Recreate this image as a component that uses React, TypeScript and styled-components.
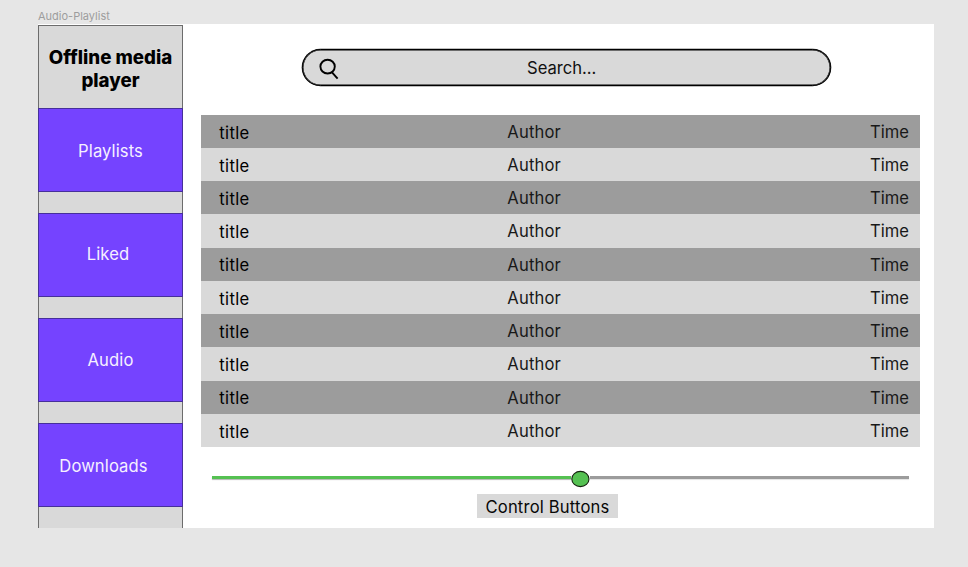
import React from "react";
import styled, { createGlobalStyle } from "styled-components";

const GlobalStyle = createGlobalStyle`
  * { box-sizing: border-box; }
  body {
    margin: 0;
    background: #e6e6e6;
    font-family: Inter, "Liberation Sans", sans-serif;
    font-optical-sizing: none;
    overflow: hidden;
  }
`;

const Canvas = styled.div`
  width: 968px;
  height: 567px;
  padding: 9px 34px 0 38px;
`;

const FrameLabel = styled.div`
  height: 15px;
  font-size: 11px;
  line-height: 15px;
  color: #9d9d9d;
`;

const Frame = styled.div`
  display: flex;
  width: 896px;
  height: 504px;
  background: #fff;
`;

const Sidebar = styled.aside`
  width: 145px;
  height: 503px;
  margin-top: 1px;
  background: #d9d9d9;
  border: 1px solid #6c6c6c;
  border-bottom: 0;
`;

const Brand = styled.h1`
  height: 82px;
  margin: 0;
  padding: 20px 0 0;
  font-size: 18.7px;
  line-height: 23px;
  font-weight: 800;
  text-align: center;
  white-space: nowrap;
  color: #000;
`;

const Nav = styled.nav`
  display: grid;
  gap: 21px;
  margin: 0 -1px;
`;

const NavButton = styled.button<{ $shift: number; $drop: number }>`
  display: flex;
  align-items: flex-start;
  justify-content: center;
  width: 145px;
  height: 84px;
  border: 1px solid #46309a;
  padding: ${(p) => p.$drop}px ${(p) => p.$shift}px 0 0;
  background: #7543ff;
  color: #f5f0ff;
  font: 400 16.6px/20px Inter, sans-serif;
  letter-spacing: 0.1px;
`;

const Main = styled.main`
  display: flex;
  flex-direction: column;
  flex: 1;
  padding: 25px 14px 0 18px;
`;

const SearchBar = styled.div`
  display: grid;
  grid-template-columns: 56px 1fr;
  align-items: center;
  width: 529px;
  height: 37px;
  margin-left: 101px;
  border: 1px solid #000;
  border-radius: 19px;
  background: #d9d9d9;
  box-shadow: inset 0 0 0 0.5px #000, 0 0 0 0.3px #000;
`;

const SearchIcon = styled.svg`
  width: 20px;
  height: 22px;
  margin: 3px 0 0 16px;
  fill: none;
  stroke: #000;
  stroke-width: 1.9;
`;

const SearchText = styled.span`
  padding-left: 168px;
  font-size: 16.6px;
  font-weight: 400;
  line-height: 20px;
  color: #111;
`;

const TrackList = styled.div`
  margin-top: 28.8px;
`;

const Track = styled.div<{ $dark: boolean }>`
  display: grid;
  grid-template-columns: 288px 1fr auto;
  height: 33.22px;
  padding: 7px 11px 0 18px;
  background: ${(p) => (p.$dark ? "#9c9c9c" : "#d9d9d9")};
  font-size: 16.6px;
  line-height: 20px;
  color: #181818;
`;

const Title = styled.span`
  padding: 0.8px 0 0 0.3px;
  letter-spacing: 0.35px;
  color: #000;
`;

const Author = styled.span`
  padding-left: 0.3px;
  letter-spacing: 0.16px;
`;

const Player = styled.div`
  display: flex;
  flex-direction: column;
`;

const Seek = styled.div`
  display: flex;
  align-items: flex-start;
  width: 697px;
  height: 18px;
  margin: 23px 0 0 11px;
`;

const Bar = styled.div<{ $played?: boolean }>`
  width: ${(p) => (p.$played ? "359px" : "auto")};
  flex: ${(p) => (p.$played ? "none" : "1")};
  height: 3px;
  margin-top: 6px;
  background: ${(p) => (p.$played ? "#55c152" : "#9c9c9c")};
  box-shadow: 0 1px 1px ${(p) => (p.$played ? "#b5b5b5" : "#e4e4e4")};
`;

const Thumb = styled.svg`
  width: 19px;
  height: 18px;
  fill: #55c152;
  stroke: #16240f;
  stroke-width: 1.1;
`;

const Controls = styled.div`
  width: 141px;
  height: 24px;
  margin: 6px 0 0 276px;
  background: #d9d9d9;
  font-size: 16.6px;
  line-height: 26px;
  letter-spacing: 0.18px;
  text-align: center;
  white-space: nowrap;
  color: #080808;
`;

const sections = [
  { name: "Playlists", shift: 0, drop: 32 },
  { name: "Liked", shift: 5, drop: 30 },
  { name: "Audio", shift: 0, drop: 31 },
  { name: "Downloads", shift: 14, drop: 32 },
];

const tracks = Array.from({ length: 10 }, (_, id) => ({
  id,
  title: "title",
  author: "Author",
  time: "Time",
}));

export default function App() {
  return (
    <Canvas>
      <GlobalStyle />
      <FrameLabel>Audio-Playlist</FrameLabel>
      <Frame>
        <Sidebar>
          <Brand>
            Offline media
            <br />
            player
          </Brand>
          <Nav>
            {sections.map((s) => (
              <NavButton key={s.name} $shift={s.shift} $drop={s.drop}>
                {s.name}
              </NavButton>
            ))}
          </Nav>
        </Sidebar>
        <Main>
          <SearchBar>
            <SearchIcon viewBox="0 0 20 22">
              <ellipse cx="8.6" cy="8.6" rx="7.2" ry="6.9" />
              <path d="M12.8 14.2L18.6 20.6" />
            </SearchIcon>
            <SearchText>Search...</SearchText>
          </SearchBar>
          <TrackList>
            {tracks.map((t) => (
              <Track key={t.id} $dark={t.id % 2 === 0}>
                <Title>{t.title}</Title>
                <Author>{t.author}</Author>
                <span>{t.time}</span>
              </Track>
            ))}
          </TrackList>
          <Player>
            <Seek>
              <Bar $played />
              <Thumb viewBox="0 0 19 18">
                <ellipse cx="9.4" cy="9" rx="8.6" ry="7.6" />
              </Thumb>
              <Bar />
            </Seek>
            <Controls>Control Buttons</Controls>
          </Player>
        </Main>
      </Frame>
    </Canvas>
  );
}
